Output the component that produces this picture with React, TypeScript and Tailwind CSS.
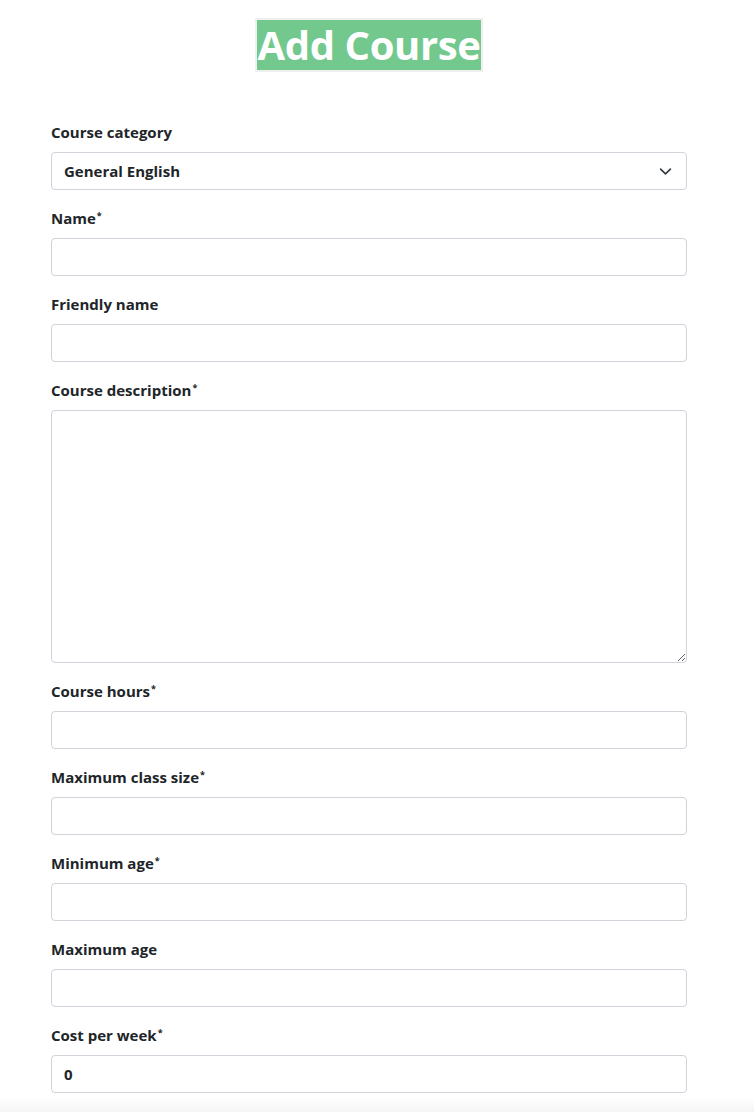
import React from 'react';

const fields: { label: string; required?: boolean; kind?: 'select' | 'textarea'; value?: string }[] = [
  { label: 'Course category', kind: 'select', value: 'General English' },
  { label: 'Name', required: true },
  { label: 'Friendly name' },
  { label: 'Course description', required: true, kind: 'textarea' },
  { label: 'Course hours', required: true },
  { label: 'Maximum class size', required: true },
  { label: 'Minimum age', required: true },
  { label: 'Maximum age' },
  { label: 'Cost per week', required: true, value: '0' },
];

function Field({ label, required, kind, value }: (typeof fields)[number]) {
  const box = 'w-full rounded-[4px] border border-[#ced4da] bg-white px-3 text-[15px] font-bold text-[#212529] outline-none';
  return (
    <div className="mb-4">
      <label className="mb-2 block h-6 text-[15px] font-bold leading-6 text-[#212529]">
        {label}
        {required ? <span className="relative -top-[5px] ml-[1px] text-[9px] leading-none">*</span> : null}
      </label>
      {kind === 'select' ? (
        <div className={`${box} flex h-[38px] items-center justify-between`}>
          <span>{value}</span>
          <svg width="13" height="13" viewBox="0 0 16 16" className="mr-[2px]">
            <path d="M2 5l6 6 6-6" fill="none" stroke="#343a40" strokeWidth="2" strokeLinecap="round" strokeLinejoin="round" />
          </svg>
        </div>
      ) : kind === 'textarea' ? (
        <textarea className={`${box} block h-[253px] py-2`} />
      ) : (
        <input className={`${box} block h-[38px]`} defaultValue={value} />
      )}
    </div>
  );
}

export default function App() {
  return (
    <div className="relative min-h-[1112px] bg-white font-['Open_Sans','Lato',sans-serif]">
      <div className="w-[738px] pt-[18px]">
        <div className="flex justify-center">
          <h1 className="flex h-[54px] items-center border-2 border-[#efefef] bg-[#72c88d] px-[1px] text-[40px] font-bold leading-[50px] tracking-[-0.01em] text-white">
            Add Course
          </h1>
        </div>
        <form className="mt-[48px] px-[51px]">
          {fields.map((f) => (
            <Field key={f.label} {...f} />
          ))}
        </form>
      </div>
      <div className="absolute bottom-0 left-0 right-0 h-[14px] bg-gradient-to-b from-[rgba(0,0,0,0)] to-[rgba(0,0,0,0.04)]" />
    </div>
  );
}
